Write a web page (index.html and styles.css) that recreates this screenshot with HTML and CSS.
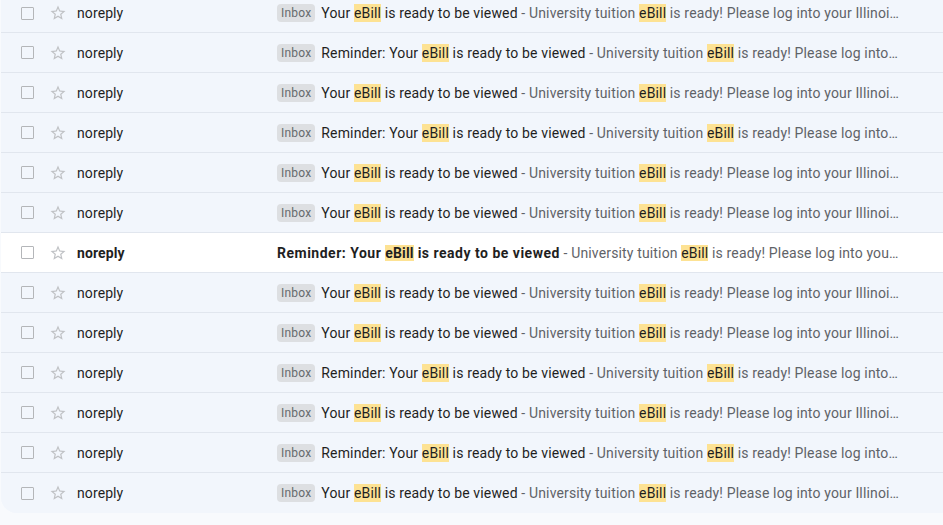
FILE: index.html
```html
<!DOCTYPE html>
<html>
<head>
<meta charset="utf-8">
<link rel="stylesheet" href="styles.css">
</head>
<body>
<div class="list" id="list"></div>
<script>
const rows = [
  ['r', 'Your '], ['r', 'Reminder: Your '], ['r', 'Your '], ['r', 'Reminder: Your '],
  ['r', 'Your '], ['r', 'Your '], ['u', 'Reminder: Your '], ['r', 'Your '],
  ['r', 'Your '], ['r', 'Reminder: Your '], ['r', 'Your '], ['r', 'Reminder: Your '], ['r', 'Your ']
];
const starSvg = '<svg class="star" viewBox="0 0 24 24" width="18" height="18"><path d="M22 9.24l-7.19-.62L12 2 9.19 8.63 2 9.24l5.46 4.73L5.82 21 12 17.27 18.18 21l-1.63-7.03L22 9.24zM12 15.4l-3.76 2.27 1-4.28-3.32-2.88 4.38-.38L12 6.1l1.71 4.04 4.38.38-3.32 2.88 1 4.28L12 15.4z"/></svg>';
const list = document.getElementById('list');
for (const [st, pre] of rows) {
  const unread = st === 'u';
  const row = document.createElement('div');
  row.className = 'row' + (unread ? ' unread' : '');
  row.innerHTML =
    '<span class="check"></span>' + starSvg +
    '<span class="sender">noreply</span>' +
    '<span class="subject-cell">' +
      (unread ? '' : '<span class="chip">Inbox</span>') +
      '<span class="subject">' + pre + '<mark>eBill</mark> is ready to be viewed</span>' +
      '<span class="snippet"> - University tuition <mark>eBill</mark> is ready! Please log into your Illinois account to view your bill</span>' +
    '</span>';
  list.appendChild(row);
}
</script>
</body>
</html>
```

FILE: styles.css
```css
html, body {
  margin: 0;
  padding: 0;
  background: #f8fafd;
  overflow: hidden;
}
body {
  font-family: Roboto, "Noto Sans", Arial, sans-serif;
  font-size: 14px;
  color: #202124;
}
.list {
  margin-top: -6px;
  margin-left: 1px;
  width: 980px;
  background: #f2f6fc;
  border-bottom-left-radius: 16px;
  overflow: hidden;
}
.row {
  box-sizing: border-box;
  height: 40px;
  display: flex;
  align-items: center;
  border-bottom: 1px solid #e1e6ee;
  background: #f2f6fc;
}
.row:first-child {
  height: 39px;
}
.row:last-child {
  border-bottom: none;
}
.row.unread {
  background: #ffffff;
}
.check {
  box-sizing: border-box;
  width: 13px;
  height: 13px;
  border: 1.5px solid #b4b6b9;
  border-radius: 1px;
  margin-left: 20px;
  flex: none;
}
.star {
  fill: #c0c2c5;
  margin-left: 15px;
  flex: none;
}
.sender {
  margin-left: 10px;
  width: 200px;
  flex: none;
  color: #1f1f1f;
  letter-spacing: 0.1px;
}
.unread .sender, .unread .subject {
  font-weight: bold;
  color: #1f1f1f;
}
.unread .subject {
  letter-spacing: 0.5px;
}
.subject-cell {
  width: 623px;
  flex: none;
  white-space: nowrap;
  overflow: hidden;
  text-overflow: ellipsis;
  letter-spacing: 0.15px;
  color: #5f6368;
}
.chip {
  display: inline-block;
  font-size: 12px;
  line-height: 18px;
  padding: 0 4px;
  border-radius: 4px;
  background: #dddfe2;
  color: #666a6e;
  margin-right: 6px;
  vertical-align: 1px;
  letter-spacing: 0.2px;
}
.subject {
  color: #1f1f1f;
}
.snippet {
  color: #5f6368;
}
mark {
  background: #fde293;
  color: #1f1f1f;
  padding: 1px 0;
  letter-spacing: 0.15px;
}
```
